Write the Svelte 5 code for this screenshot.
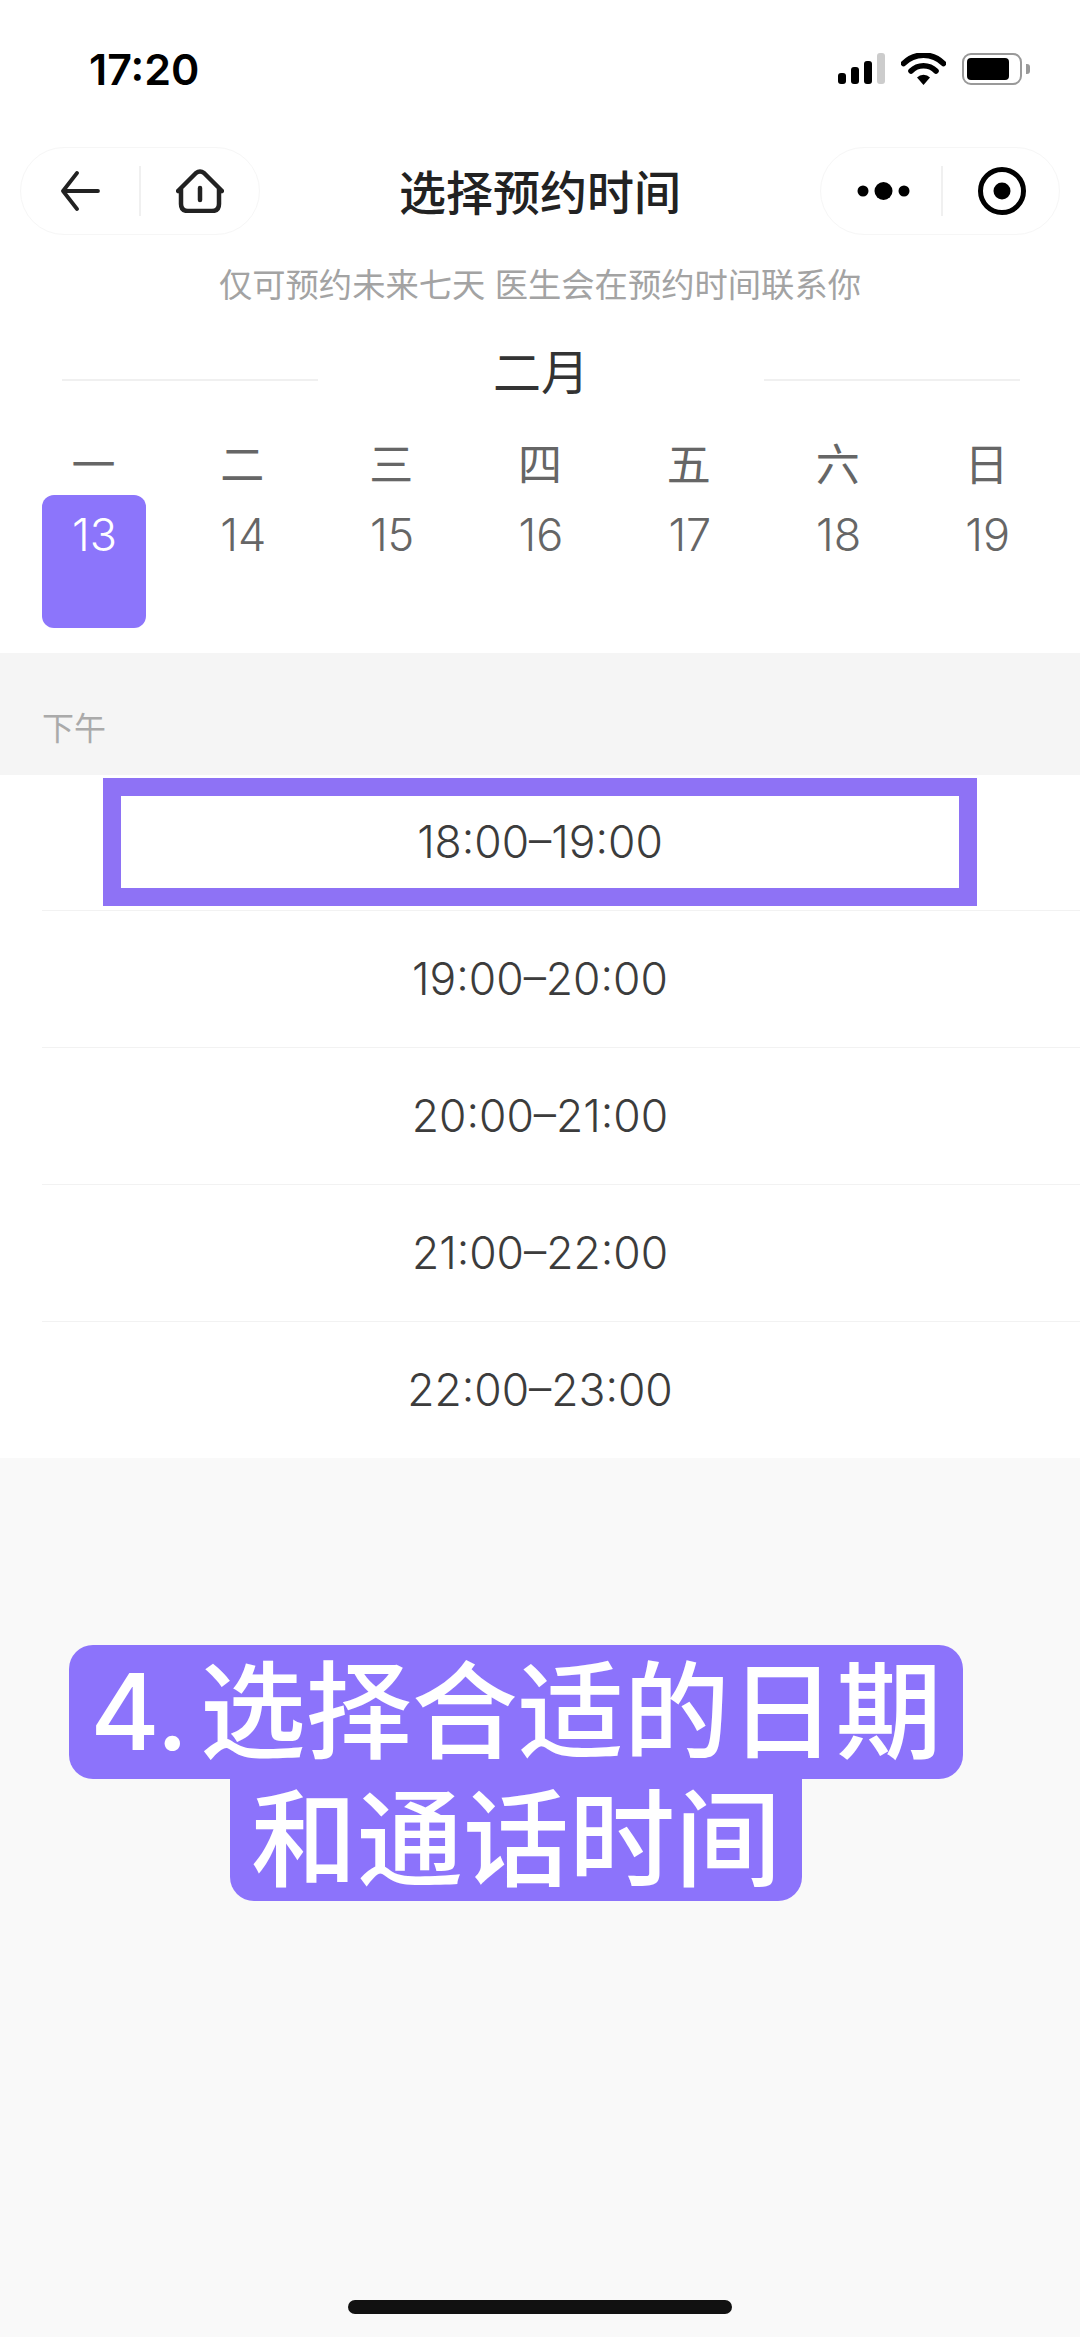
<script>
    const weekdays = ["一", "二", "三", "四", "五", "六", "日"];
    const dates = [13, 14, 15, 16, 17, 18, 19];
    const slots = ["18:00–19:00", "19:00–20:00", "20:00–21:00", "21:00–22:00", "22:00–23:00"];
</script>

<div class="page">
    <div class="top">
        <div class="status">
            <span class="time">17:20</span>
            <div class="status-icons">
                <div class="signal">
                    <i style="height: 11px"></i>
                    <i style="height: 17px"></i>
                    <i style="height: 23px"></i>
                    <i class="off" style="height: 31px"></i>
                </div>
                <svg class="wifi" width="45" height="32" viewBox="0 0 45 32">
                    <path d="M2.5 10.5a28 28 0 0 1 40 0" fill="none" stroke="#000" stroke-width="5.6" stroke-linecap="round" />
                    <path d="M10 18a17.5 17.5 0 0 1 25 0" fill="none" stroke="#000" stroke-width="5.6" stroke-linecap="round" />
                    <path d="M16 24.5a9 9 0 0 1 13 0L22.500 32z" fill="#000" />
                </svg>
                <div class="battery"><b></b></div>
                <span class="battery-cap"></span>
            </div>
        </div>

        <div class="nav">
            <div class="capsule">
                <div class="cell">
                    <svg width="40" height="40" viewBox="0 0 40 40">
                        <path d="M38 20H3M17 2 3 20l14 18" fill="none" stroke="#222" stroke-width="3.800" stroke-linecap="round" stroke-linejoin="round" />
                    </svg>
                </div>
                <div class="divider"></div>
                <div class="cell">
                    <svg width="48" height="44" viewBox="0 0 48 44">
                        <path d="M2 22 20 4q4-3 8 0l18 18M5 20v15q0 7 7 7h24q7 0 7-7V20M24 19v12" fill="none" stroke="#222" stroke-width="4.500" stroke-linecap="round" stroke-linejoin="round" />
                    </svg>
                </div>
            </div>
            <h1>选择预约时间</h1>
            <div class="capsule">
                <div class="cell shift-dots">
                    <svg width="54" height="20" viewBox="0 0 54 20">
                        <circle cx="6" cy="10" r="5.500" />
                        <circle cx="26.500" cy="10" r="9" />
                        <circle cx="47" cy="10" r="5.500" />
                    </svg>
                </div>
                <div class="divider"></div>
                <div class="cell shift-record">
                    <svg width="50" height="50" viewBox="0 0 50 50">
                        <circle cx="25" cy="25" r="21.500" fill="none" stroke="#000" stroke-width="5" />
                        <circle cx="25" cy="25" r="8.500" />
                    </svg>
                </div>
            </div>
        </div>

        <p class="hint">仅可预约未来七天 医生会在预约时间联系你</p>

        <div class="month">
            <span class="rule"></span>
            <span class="month-name">二月</span>
            <span class="rule"></span>
        </div>

        <div class="week">
            {#each weekdays as day}
                <span>{day}</span>
            {/each}
        </div>
        <div class="days">
            {#each dates as date, i}
                <div class="day" class:active={i === 0}>{date}</div>
            {/each}
        </div>
    </div>

    <div class="section-label">下午</div>

    <div class="slots">
        {#each slots as slot, i}
            <div class="slot">
                <span>{slot}</span>
                {#if i === 0}
                    <div class="highlight"></div>
                {/if}
            </div>
        {/each}
    </div>

    <div class="rest">
        <div class="caption">
            <span class="line-one">4. 选择合适的日期</span>
            <span class="line-two">和通话时间</span>
        </div>
        <div class="home-bar"></div>
    </div>
</div>

<style>
    :global(body) {
        margin: 0;
        background: #f9f9f9;
    }
    .page {
        width: 1080px;
        height: 2337px;
        display: flex;
        flex-direction: column;
        overflow: hidden;
        font-family: Inter, "Noto Sans CJK SC", sans-serif;
    }
    .top {
        background: #fff;
        height: 653px;
    }
    .status {
        height: 137px;
        display: flex;
        justify-content: space-between;
        align-items: center;
        padding: 0 50px 0 89px;
    }
    .time {
        font-size: 43px;
        font-weight: 600;
        color: #000;
    }
    .status-icons {
        display: flex;
        align-items: center;
    }
    .signal {
        display: flex;
        align-items: flex-end;
        gap: 5px;
        height: 31px;
    }
    .signal i {
        display: block;
        width: 8px;
        border-radius: 3px;
        background: #000;
    }
    .signal i.off {
        background: #ccc;
    }
    .wifi {
        margin-left: 16px;
    }
    .battery {
        margin-left: 16px;
        width: 60px;
        height: 32px;
        box-sizing: border-box;
        border: 2.500px solid #999;
        border-radius: 9px;
        padding: 3px;
    }
    .battery b {
        display: block;
        width: 42px;
        height: 100%;
        background: #000;
        border-radius: 4px;
    }
    .battery-cap {
        margin-left: 4px;
        width: 4px;
        height: 10px;
        background: #999;
        border-radius: 0 3px 3px 0;
    }
    .nav {
        margin-top: 10px;
        height: 88px;
        padding: 0 20px;
        display: flex;
        justify-content: space-between;
        align-items: center;
    }
    .capsule {
        box-sizing: border-box;
        width: 240px;
        height: 88px;
        border: 1.500px solid #f6f6f6;
        border-radius: 44px;
        display: flex;
        align-items: center;
    }
    .cell {
        box-sizing: border-box;
        flex: 1;
        display: flex;
        justify-content: center;
        align-items: center;
    }
    .cell.shift-dots {
        padding-left: 6px;
    }
    .cell.shift-record {
        padding-left: 2px;
    }
    .divider {
        width: 1.500px;
        height: 50px;
        background: #f0f0f0;
    }
    h1 {
        margin: 0 0 3px;
        font-size: 47px;
        font-weight: 500;
        color: #222;
    }
    .hint {
        margin: 25px 0 0;
        height: 50px;
        line-height: 50px;
        text-align: center;
        font-size: 33.300px;
        color: #a3a3a3;
    }
    .month {
        margin-top: 29px;
        padding: 0 60px 0 62px;
        height: 60px;
        display: flex;
        justify-content: space-between;
        align-items: center;
    }
    .rule {
        width: 256px;
        height: 2px;
        margin-top: 21px;
        background: #f0f0f0;
    }
    .month-name {
        font-size: 48px;
        color: #333;
    }
    .week,
    .days {
        display: grid;
        grid-template-columns: repeat(7, 1fr);
        justify-items: center;
        color: #666;
    }
    .week {
        margin-top: 36px;
        padding: 0 19px;
        height: 60px;
        line-height: 60px;
        font-size: 44px;
    }
    .days {
        padding: 0 18px 0 20px;
    }
    .day {
        box-sizing: border-box;
        width: 104px;
        height: 133px;
        padding-top: 10px;
        line-height: 60px;
        text-align: center;
        font-size: 45px;
        font-weight: 300;
        border-radius: 12px;
    }
    .day.active {
        background: #8c75fb;
        color: #fff;
    }
    .section-label {
        box-sizing: border-box;
        height: 121.500px;
        padding: 24px 0 0 42px;
        display: flex;
        align-items: center;
        background: #f5f5f5;
        font-size: 32px;
        color: #aaa;
    }
    .slots {
        background: #fff;
        padding-left: 42px;
    }
    .slot {
        position: relative;
        box-sizing: border-box;
        height: 136.800px;
        padding-right: 42px;
        display: flex;
        justify-content: center;
        align-items: center;
        border-bottom: 1.500px solid #f2f2f2;
        font-size: 44.400px;
        font-weight: 300;
        color: #3c3c3c;
    }
    .slot:last-child {
        border-bottom: none;
    }
    .highlight {
        position: absolute;
        box-sizing: border-box;
        left: 61px;
        top: 3px;
        width: 874px;
        height: 128px;
        border: 18px solid #8e72f5;
    }
    .rest {
        flex: 1;
        display: flex;
        flex-direction: column;
        align-items: center;
        background: #f9f9f9;
    }
    .caption {
        margin-top: 187px;
        margin-right: 48px;
        display: flex;
        flex-direction: column;
        align-items: center;
        color: #fff;
        font-size: 106px;
        font-weight: 500;
        line-height: 122px;
    }
    .line-one,
    .line-two {
        box-sizing: border-box;
        background: #8c73fb;
    }
    .line-one {
        height: 134px;
        padding: 6px 21px 0;
        border-radius: 24px;
        white-space: nowrap;
        word-spacing: -16px;
    }
    .line-two {
        height: 122px;
        padding: 0 21px;
        border-radius: 0 0 24px 24px;
    }
    .home-bar {
        margin-top: auto;
        margin-bottom: 23px;
        width: 384px;
        height: 14px;
        border-radius: 7px;
        background: #111;
    }
</style>
